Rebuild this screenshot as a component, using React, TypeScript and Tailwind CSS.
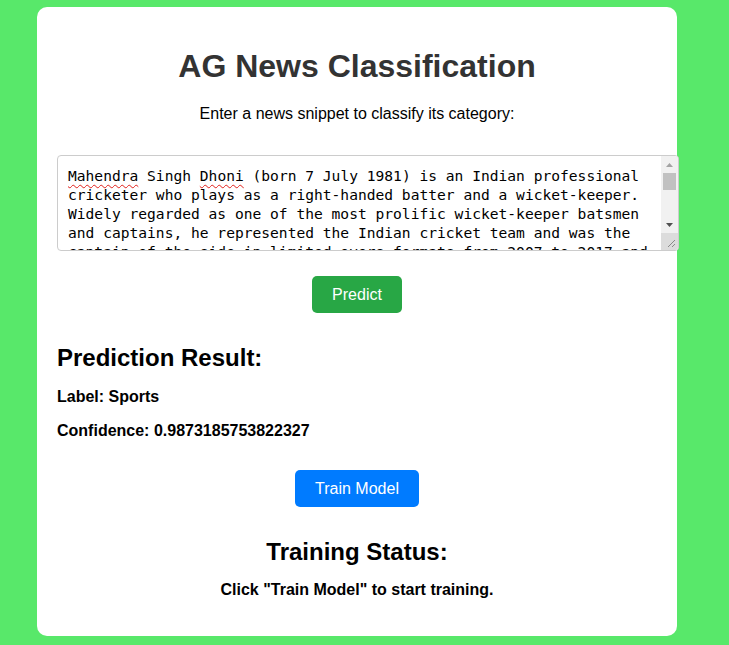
import React from 'react';

const rest =
  ' (born 7 July 1981) is an Indian professional cricketer who plays as a right-handed batter and a wicket-keeper. Widely regarded as one of the most prolific wicket-keeper batsmen and captains, he represented the Indian cricket team and was the captain of the side in limited overs formats from 2007 to 2017 and in Test cricket from 2008 to 2014. He has also captained Chennai Super Kings in the Indian Premier League, leading them to five titles.';

const Squiggle = ({ children }: { children: React.ReactNode }) => (
  <span className="underline decoration-wavy decoration-[#e0201a] decoration-1 underline-offset-[3px]">
    {children}
  </span>
);

// fake textarea so the classic scrollbar + spellcheck marks show up like the screenshot
const SnippetBox = () => (
  <div className="mt-[32px] w-[622px] h-[96px] flex border border-[#ccc] rounded-[4px] bg-white overflow-hidden">
    <div
      role="textbox"
      className="flex-1 px-[10px] py-[10px] overflow-hidden text-black text-[14.6px] leading-[19px] font-['DejaVu_Sans_Mono',monospace] break-words"
    >
      <Squiggle>Mahendra</Squiggle> Singh <Squiggle>Dhoni</Squiggle>
      {rest}
    </div>
    <div className="w-[17px] flex flex-col bg-[#f1f1f1]">
      <div className="h-[17px] flex items-center justify-center">
        <svg width="7" height="4" viewBox="0 0 7 4">
          <path d="M3.5 0 L7 4 L0 4 Z" fill="#a3a3a3" />
        </svg>
      </div>
      <div className="mx-[2px] h-[17px] bg-[#c1c1c1]" />
      <div className="flex-1" />
      <div className="h-[17px] flex items-center justify-center">
        <svg width="7" height="4" viewBox="0 0 7 4">
          <path d="M0 0 L7 0 L3.5 4 Z" fill="#505050" />
        </svg>
      </div>
      <div className="h-[17px] bg-[#dcdcdc] flex items-end justify-end p-[2px]">
        <svg width="10" height="10" viewBox="0 0 10 10">
          <path d="M9 2 L2 9 M9 6 L6 9" stroke="#8a8a8a" strokeWidth="1" />
        </svg>
      </div>
    </div>
  </div>
);

const App = () => {
  return (
    <div className="min-h-[645px] bg-[#58e86a] pt-[7px] pl-[37px] font-['Liberation_Sans',Arial,sans-serif]">
      <div className="w-[640px] bg-white rounded-[10px] px-[20px] pt-[20px] pb-[37px]">
        <h1 className="mt-[21px] text-center text-[32px] leading-[37px] font-bold text-[#333]">
          AG News Classification
        </h1>
        <p className="mt-[20px] text-center text-[16px] leading-[18px] text-black">
          Enter a news snippet to classify its category:
        </p>

        <SnippetBox />

        <div className="mt-[25px] flex justify-center">
          <button className="h-[37px] px-[20px] rounded-[5px] bg-[#28a745] text-white text-[16px]">
            Predict
          </button>
        </div>

        <h2 className="mt-[31px] text-[24px] leading-[28px] font-bold text-black">Prediction Result:</h2>
        <p className="mt-[16px] text-[16px] leading-[18px] font-bold text-black">Label: Sports</p>
        <p className="mt-[16px] text-[16px] leading-[18px] font-bold text-black">
          Confidence: 0.9873185753822327
        </p>

        <div className="mt-[30px] flex justify-center">
          <button className="h-[37px] px-[20px] rounded-[5px] bg-[#007bff] text-white text-[16px]">
            Train Model
          </button>
        </div>

        <h2 className="mt-[31px] text-center text-[24px] leading-[28px] font-bold text-black">
          Training Status:
        </h2>
        <p className="mt-[15px] text-center text-[16px] leading-[18px] font-bold text-black">
          Click "Train Model" to start training.
        </p>
      </div>
    </div>
  );
};

export default App;
